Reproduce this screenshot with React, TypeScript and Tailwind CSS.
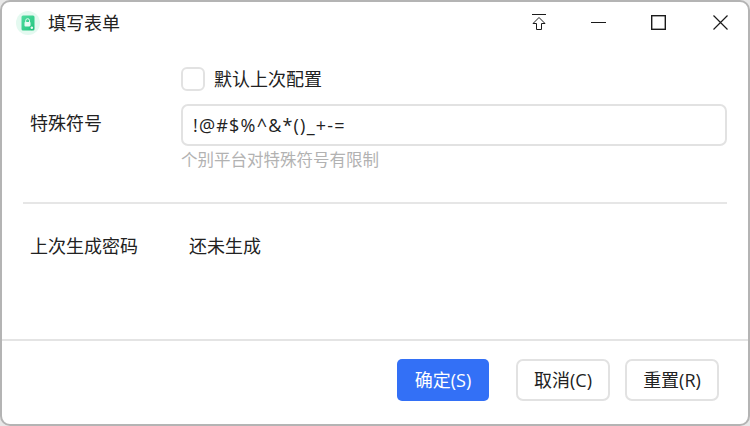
export default function App() {
  const font = "font-['Open_Sans','Noto_Sans_CJK_SC',sans-serif]";
  return (
    <div className={`w-[750px] h-[426px] bg-[#e8e8e8] ${font}`}>
      <div className="w-full h-full flex flex-col bg-white border-2 border-[#b4b4b4] rounded-[10px] text-[#222]">
        <div className="h-[42px] flex items-center shrink-0 pl-[14px]">
          <div className="w-[24px] h-[24px] rounded-full bg-[#e4f9f0] flex items-center justify-center">
            <svg width="14" height="16" viewBox="0 0 14 16">
              <defs>
                <linearGradient id="g" x1="0" y1="0" x2="1" y2="1">
                  <stop offset="0" stopColor="#4fdc9f" />
                  <stop offset="1" stopColor="#25c47f" />
                </linearGradient>
              </defs>
              <path d="M2 0.5H12a1.5 1.5 0 0 1 1.5 1.5V14a1.5 1.5 0 0 1-1.5 1.5H2A1.5 1.5 0 0 1 0.5 14V2A1.5 1.5 0 0 1 2 0.5Z" fill="url(#g)" />
              <path d="M4.7 7V5.6a1.9 1.9 0 0 1 3.8 0V7" fill="none" stroke="#e9fbf3" strokeWidth="1" />
              <rect x="3.5" y="7" width="6" height="4.6" rx="0.8" fill="#e9fbf3" />
              <circle cx="10.8" cy="12.8" r="2.4" fill="#25c47f" />
              <circle cx="10.8" cy="12.8" r="1.3" fill="#e9fbf3" />
            </svg>
          </div>
          <span className="ml-[8px] text-[18px] leading-[24px]">填写表单</span>
          <div className="ml-auto flex items-center h-full pb-[1px]">
            <button className="w-[14px] flex justify-center mr-[45px]">
              <svg width="14" height="17" viewBox="0 0 14 17" fill="none" stroke="#1a1a1a" strokeWidth="1">
                <path d="M0 0.5H14" />
                <path d="M7 3.5L13 9.5H9.5V15.5H4.5V9.5H1Z" />
              </svg>
            </button>
            <button className="w-[15px] flex justify-center mr-[45px]">
              <svg width="15" height="15" viewBox="0 0 15 15" fill="none" stroke="#1a1a1a" strokeWidth="1">
                <path d="M0 7.5H15" />
              </svg>
            </button>
            <button className="w-[15px] flex justify-center mr-[47px]">
              <svg width="15" height="15" viewBox="0 0 15 15" fill="none" stroke="#1a1a1a" strokeWidth="1.4">
                <rect x="0.7" y="0.7" width="13.6" height="13.6" />
              </svg>
            </button>
            <button className="w-[15px] flex justify-center mr-[20px]">
              <svg width="15" height="15" viewBox="0 0 15 15" fill="none" stroke="#1a1a1a" strokeWidth="1.2">
                <path d="M0.5 0.5L14.5 14.5M14.5 0.5L0.5 14.5" />
              </svg>
            </button>
          </div>
        </div>
        <div className="flex-1 flex flex-col px-[21px]">
          <div className="flex flex-col">
            <div className="flex items-center pl-[158px] mt-[23px] h-[24px]">
              <span className="w-[24px] h-[24px] rounded-[6px] border-2 border-[#e2e2e2] bg-white" />
              <span className="ml-[9px] text-[18px] leading-[24px]">默认上次配置</span>
            </div>
            <div className="flex items-center mt-[13px]">
              <span className="w-[158px] pl-[7px] text-[18px] leading-[24px] mb-[5px]">特殊符号</span>
              <div className="w-[546px] h-[42px] rounded-[7px] border-2 border-[#e2e2e2] flex items-center pl-[10px] text-[18px] tracking-[1.2px] text-[#222]">
                !@#$%^&amp;*()_+-=
              </div>
            </div>
            <div className="pl-[158px] text-[16.5px] leading-[24px] text-[#b2b2b2] mt-[2px]">个别平台对特殊符号有限制</div>
          </div>
          <div className="h-[2px] bg-[#e6e6e6] mt-[30px]" />
          <div className="flex items-center mt-[30px] text-[18px] leading-[24px]">
            <span className="w-[166px] pl-[7px]">上次生成密码</span>
            <span>还未生成</span>
          </div>
        </div>
        <div className="h-[85px] shrink-0 border-t-2 border-[#e4e4e4] flex items-center justify-end pr-[29px] text-[18px] pb-[5px]">
          <button className="w-[92px] h-[42px] rounded-[5px] bg-[#3370f6] text-white">确定(S)</button>
          <button className="ml-[27px] w-[94px] h-[42px] rounded-[7px] border-2 border-[#e2e2e2] bg-white">取消(C)</button>
          <button className="ml-[15px] w-[94px] h-[42px] rounded-[7px] border-2 border-[#e2e2e2] bg-white">重置(R)</button>
        </div>
      </div>
    </div>
  );
}
